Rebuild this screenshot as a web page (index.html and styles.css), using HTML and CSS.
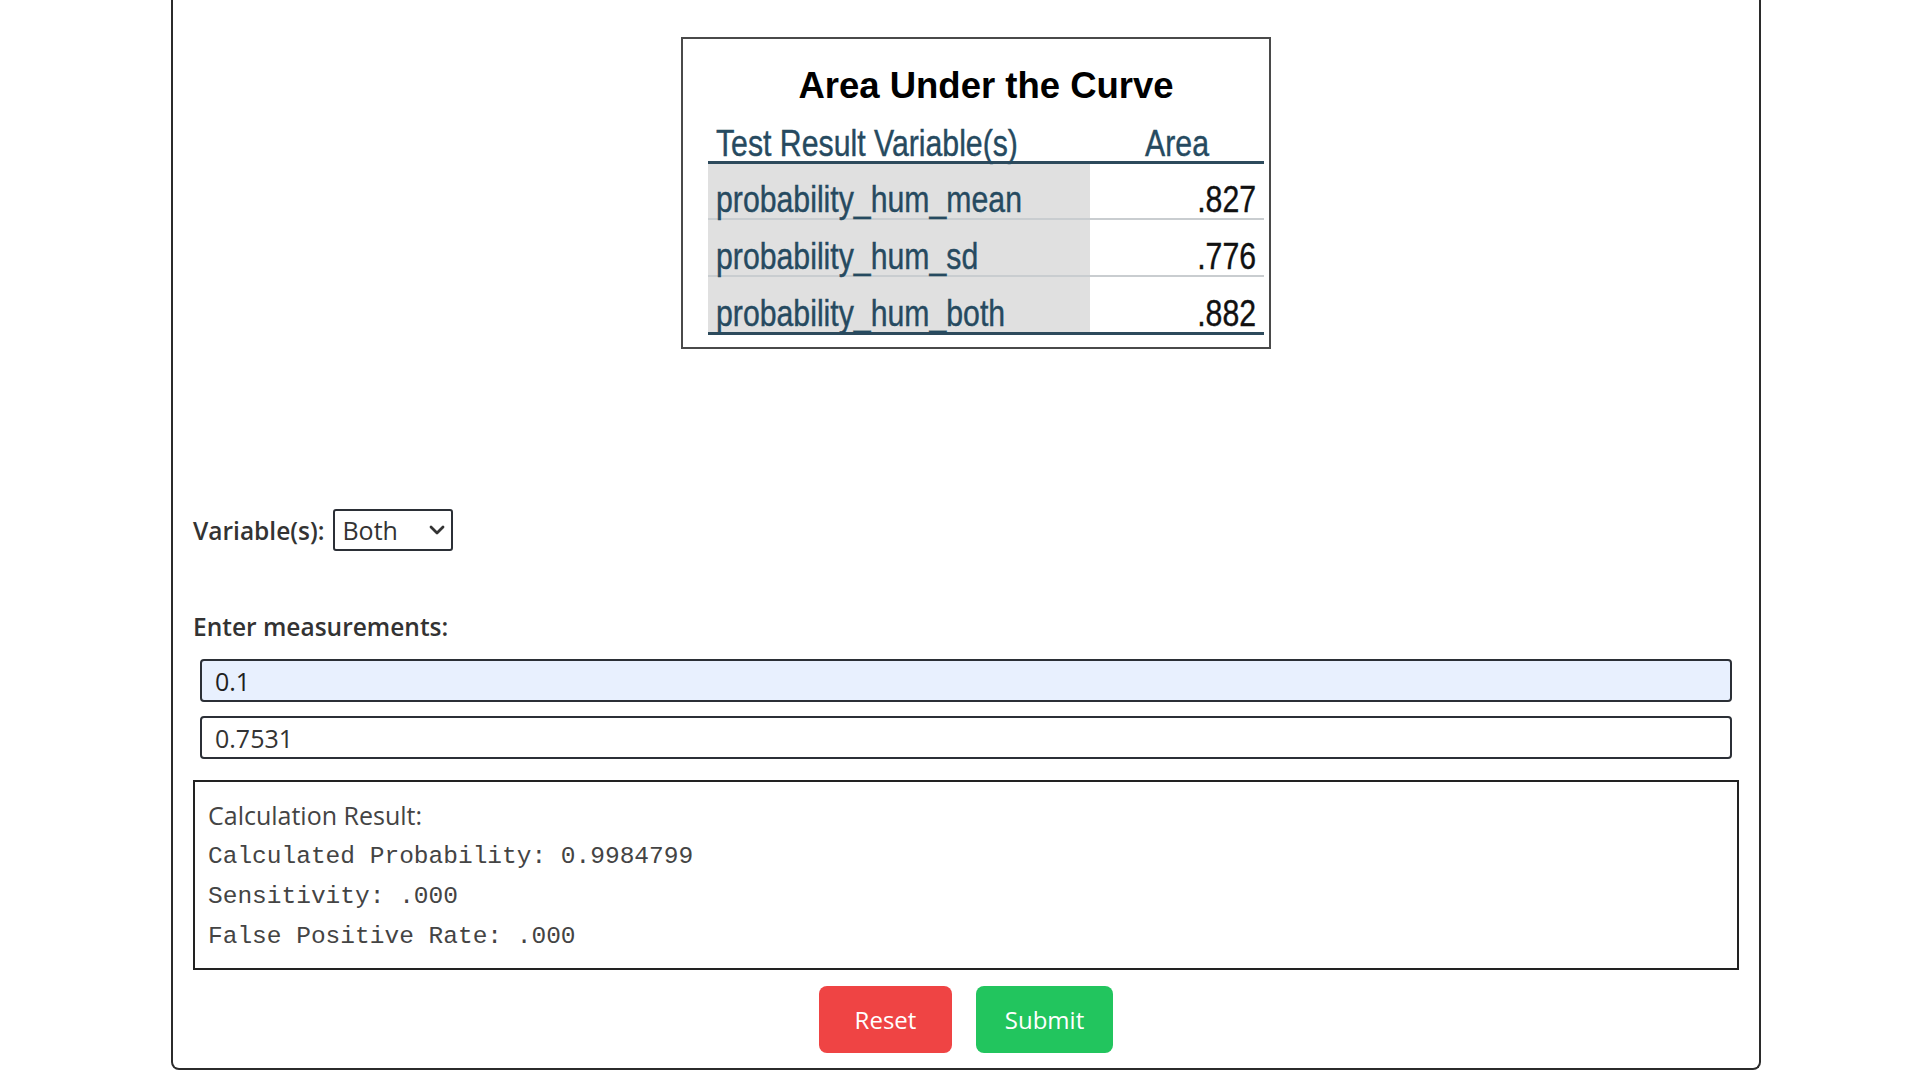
FILE: index.html
```html
<!DOCTYPE html>
<html lang="en">
<head>
<meta charset="utf-8">
<title>ROC Calculator</title>
<link rel="stylesheet" href="styles.css">
</head>
<body>
<div class="panel">
  <div class="figure-row">
    <div class="auc-box">
      <div class="auc-title">Area Under the Curve</div>
      <table class="auc-table">
        <thead>
          <tr><th class="col-var"><span class="nw">Test Result Variable(s)</span></th><th class="col-area"><span class="nw">Area</span></th></tr>
        </thead>
        <tbody>
          <tr><td class="col-var"><span class="nw">probability_hum_mean</span></td><td class="col-area"><span class="nw">.827</span></td></tr>
          <tr><td class="col-var"><span class="nw">probability_hum_sd</span></td><td class="col-area"><span class="nw">.776</span></td></tr>
          <tr class="last"><td class="col-var"><span class="nw">probability_hum_both</span></td><td class="col-area"><span class="nw">.882</span></td></tr>
        </tbody>
      </table>
    </div>
  </div>

  <div class="var-row">
    <label class="field-label" for="vars">Variable(s):</label>
    <div class="select-wrap">
      <select id="vars" class="select">
        <option>Both</option>
        <option>Mean</option>
        <option>SD</option>
      </select>
      <svg class="chevron" width="16" height="10" viewBox="0 0 16 10"><path d="M2 2 L8 8 L14 2" fill="none" stroke="#333" stroke-width="2.8" stroke-linecap="round" stroke-linejoin="round"/></svg>
    </div>
  </div>

  <div class="field-label meas-label">Enter measurements:</div>
  <div class="inputs">
    <input class="text-input filled" type="text" value="0.1">
    <input class="text-input" type="text" value="0.7531">
  </div>

  <div class="result">
    <div class="result-head">Calculation Result:</div>
    <div class="mono">Calculated Probability: 0.9984799</div>
    <div class="mono">Sensitivity: .000</div>
    <div class="mono">False Positive Rate: .000</div>
  </div>

  <div class="actions">
    <button class="btn btn-reset" type="button">Reset</button>
    <button class="btn btn-submit" type="button">Submit</button>
  </div>
</div>
</body>
</html>
```

FILE: styles.css
```css
html, body {
  margin: 0;
  padding: 0;
  background: #ffffff;
}

body {
  font-family: "Open Sans", "Noto Sans", "DejaVu Sans", sans-serif;
  color: #333333;
}

.panel {
  box-sizing: border-box;
  width: 1590px;
  margin-left: 171px;
  border: 2px solid #2b2b2b;
  border-top: 0;
  border-radius: 0 0 8px 8px;
  padding: 37px 20px 15px 20px;
}

.figure-row {
  display: flex;
  padding-left: 488px;
}

.auc-box {
  box-sizing: border-box;
  width: 590px;
  height: 312px;
  border: 2px solid #4a4a4a;
  padding: 0 5px 0 25px;
  background: #ffffff;
}

.auc-title {
  margin-top: 27px;
  height: 40px;
  line-height: 40px;
  text-align: center;
  font-family: "Liberation Sans", Arial, sans-serif;
  font-weight: bold;
  font-size: 36.5px;
  color: #000000;
}

.auc-table {
  width: 556px;
  table-layout: fixed;
  border-collapse: collapse;
  font-family: "Liberation Sans", Arial, sans-serif;
  font-size: 36px;
  color: #264a60;
}

.nw {
  display: inline-block;
  transform: scaleX(0.84);
  transform-origin: left center;
  white-space: nowrap;
  -webkit-text-stroke: 0.4px currentColor;
}

.col-area .nw {
  transform-origin: right center;
}

th.col-area .nw {
  transform-origin: center center;
}

.auc-table th,
.auc-table td {
  box-sizing: border-box;
  overflow: visible;
  white-space: nowrap;
}

.auc-table th {
  font-weight: normal;
  height: 56px;
  vertical-align: bottom;
  line-height: 34px;
  padding: 0;
  border-bottom: 3px solid #2d4a5c;
}

.auc-table th.col-var {
  width: 382px;
  text-align: left;
  padding-left: 8px;
}

.auc-table th.col-area {
  width: 174px;
  text-align: center;
}

.auc-table td {
  height: 57px;
  vertical-align: bottom;
  line-height: 37px;
  padding: 0;
  border-bottom: 2px solid #c9cdd0;
}

.auc-table tr.last td {
  border-bottom: 3px solid #2d4a5c;
}

.auc-table td.col-var {
  background: #e0e0e0;
  padding-left: 8px;
  text-align: left;
}

.auc-table td.col-area {
  text-align: right;
  padding-right: 8px;
  color: #111111;
}

.var-row {
  display: flex;
  align-items: center;
  gap: 9px;
  margin-top: 160px;
  height: 42px;
}

.field-label {
  font-size: 24.5px;
  font-weight: 600;
  line-height: 33px;
  color: #333333;
}

.select-wrap {
  position: relative;
  width: 120px;
  height: 42px;
}

.select {
  appearance: none;
  -webkit-appearance: none;
  box-sizing: border-box;
  width: 120px;
  height: 42px;
  border: 2px solid #2b2f36;
  border-radius: 3px;
  background: #ffffff;
  padding: 0 0 0 7px;
  font-family: "Open Sans", "Noto Sans", sans-serif;
  font-size: 25px;
  color: #333333;
}

.chevron {
  position: absolute;
  right: 8px;
  top: 16px;
  pointer-events: none;
}

.meas-label {
  margin-top: 59px;
}

.inputs {
  display: flex;
  flex-direction: column;
  gap: 14px;
  margin: 16px 7px 0 7px;
}

.text-input {
  box-sizing: border-box;
  width: 100%;
  height: 43px;
  border: 2px solid #2b2f36;
  border-radius: 4px;
  padding: 0 0 0 13px;
  font-family: "Open Sans", "Noto Sans", sans-serif;
  font-size: 25px;
  color: #333333;
  background: #ffffff;
  outline: none;
}

.text-input.filled {
  background: #e8f0fe;
  color: #1f1f1f;
}

.result {
  box-sizing: border-box;
  margin-top: 21px;
  height: 190px;
  border: 2px solid #222222;
  padding: 13px 13px 0 13px;
  color: #444444;
}

.result-head {
  font-size: 25px;
  line-height: 40px;
  margin-bottom: 2px;
}

.mono {
  font-family: "Liberation Mono", "DejaVu Sans Mono", monospace;
  font-size: 24.5px;
  line-height: 40px;
  white-space: pre;
}

.actions {
  display: flex;
  justify-content: center;
  gap: 24px;
  margin-top: 16px;
}

.btn {
  height: 67px;
  border: 0;
  border-radius: 8px;
  font-family: "Open Sans", "Noto Sans", sans-serif;
  font-size: 24px;
  color: #ffffff;
  padding: 0;
}

.btn-reset {
  width: 133px;
  background: #ef4444;
}

.btn-submit {
  width: 137px;
  background: #22c55e;
}
```
